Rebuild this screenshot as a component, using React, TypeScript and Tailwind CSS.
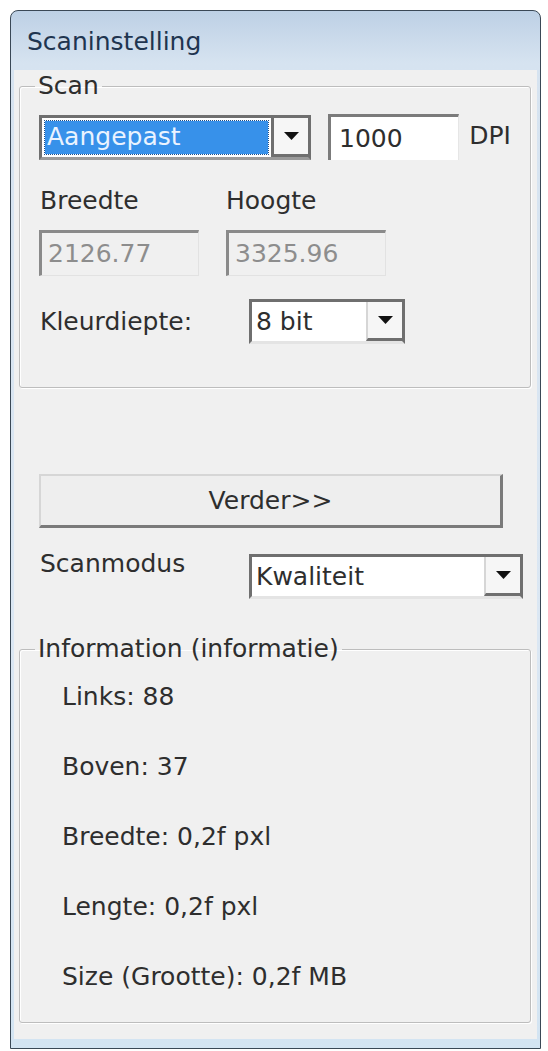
import React from "react";

const Arrow = () => (
  <svg width="15" height="8" viewBox="0 0 15 8">
    <polygon points="0,0 15,0 7.5,8" fill="#111" />
  </svg>
);

function Combo({
  width,
  children,
  height = 45,
}: {
  width: number;
  children: React.ReactNode;
  height?: number;
}) {
  return (
    <div
      className="flex border-[3px] border-[#6f6f6f] border-b-[#e4e4e4] bg-white"
      style={{ width, height }}
    >
      <div className="flex-1 flex items-center min-w-0">{children}</div>
      <div className="w-[36px] flex items-center justify-center bg-[#f6f6f6] border-b-[3px] border-[#6f6f6f] border-l-[2px] border-l-[#d6d6d6]">
        <Arrow />
      </div>
    </div>
  );
}

export default function App() {
  return (
    <div className="w-[548px] h-[1051px] bg-white pt-[10px] pl-[10px] font-['DejaVu_Sans',Tahoma,Verdana,sans-serif] text-[25px] leading-[32px] text-[#2e2e2e]">
      <div className="w-[531px] h-[1039px] rounded-t-[8px] border border-[#3a4856] bg-[linear-gradient(180deg,#bdd0e5_0%,#d6e3f0_5%,#dbe7f3_60%,#d3e4f2_100%)] flex flex-col">
        <div className="h-[59px] flex items-center pl-[16px] pt-[2px] text-[#1f3550]">
          Scaninstelling
        </div>
        <div className="flex-1 mx-[3px] mb-[9px] bg-[#f0f0f0] flex flex-col">
          {/* Scan group */}
          <fieldset className="ml-[5px] w-[512px] h-[318px] border border-[#bdbdbd] rounded-[3px] shadow-[inset_1px_1px_0_#ffffff,1px_1px_0_#ffffff] px-[19px] pt-0 pb-0 m-0 min-w-0">
            <legend className="ml-[-4px] px-[3px] leading-[32px]">Scan</legend>
            <div className="mt-[12px] flex items-center">
              <div className="flex border-[3px] border-[#6f6f6f] border-b-[#9a9a9a] bg-white w-[276px] h-[45px]">
                <div className="flex-1 p-[3px] flex">
                  <div className="flex-1 bg-[#3791ea] outline outline-1 outline-dotted outline-[#1c4f8a] text-[#eaf3ff] flex items-center pl-[2px]">
                    Aangepast
                  </div>
                </div>
                <div className="w-[37px] flex items-center justify-center bg-[#f6f6f6] border-l-[3px] border-b-[3px] border-[#6f6f6f]">
                  <Arrow />
                </div>
              </div>
              <div className="ml-[17px] w-[133px] h-[46px] bg-white border-t-[3px] border-l-[3px] border-[#7b7b7b] border-r border-r-[#e6e6e6] flex items-center pl-[8px]">
                1000
              </div>
              <div className="ml-[10px] mt-[-3px]">DPI</div>
            </div>
            <div className="mt-[25px] flex">
              <div className="w-[187px] pl-[1px]">Breedte</div>
              <div>Hoogte</div>
            </div>
            <div className="mt-[13px] flex">
              <div className="w-[160px] h-[46px] border-t-[3px] border-l-[3px] border-[#8a8a8a] border-r border-b border-r-[#e2e2e2] border-b-[#e2e2e2] text-[#8d8d8d] flex items-center pl-[6px]">
                2126.77
              </div>
              <div className="ml-[27px] w-[160px] h-[46px] border-t-[3px] border-l-[3px] border-[#8a8a8a] border-r border-b border-r-[#e2e2e2] border-b-[#e2e2e2] text-[#8d8d8d] flex items-center pl-[6px]">
                3325.96
              </div>
            </div>
            <div className="mt-[23px] flex items-center">
              <div className="w-[210px] pl-[1px]">Kleurdiepte:</div>
              <Combo width={156}>
                <span className="pl-[4px]">8 bit</span>
              </Combo>
            </div>
          </fieldset>

          {/* Verder button */}
          <div className="mt-[86px] ml-[25px] w-[464px] h-[54px] bg-[#eeeeee] border-t-[2px] border-l-[2px] border-[#d6d6d6] border-r-[3px] border-b-[3px] border-r-[#7a7a7a] border-b-[#7a7a7a] flex items-center justify-center">
            Verder&gt;&gt;
          </div>

          {/* Scanmodus */}
          <div className="mt-[26px] ml-[26px] flex items-start">
            <div className="w-[209px] mt-[-6px]">Scanmodus</div>
            <Combo width={274}>
              <span className="pl-[4px]">Kwaliteit</span>
            </Combo>
          </div>

          {/* Information group */}
          <fieldset className="mt-[34px] ml-[5px] w-[512px] h-[390px] border border-[#bdbdbd] rounded-[3px] shadow-[inset_1px_1px_0_#ffffff,1px_1px_0_#ffffff] pl-[42px] pr-[19px] pt-0 pb-0 m-0 min-w-0">
            <legend className="ml-[-27px] px-[3px] leading-[32px]">
              Information (informatie)
            </legend>
            <div className="mt-[16px] flex flex-col gap-[38px]">
              <div>Links: 88</div>
              <div>Boven: 37</div>
              <div>Breedte: 0,2f pxl</div>
              <div>Lengte: 0,2f pxl</div>
              <div>Size (Grootte): 0,2f MB</div>
            </div>
          </fieldset>
        </div>
      </div>
    </div>
  );
}
